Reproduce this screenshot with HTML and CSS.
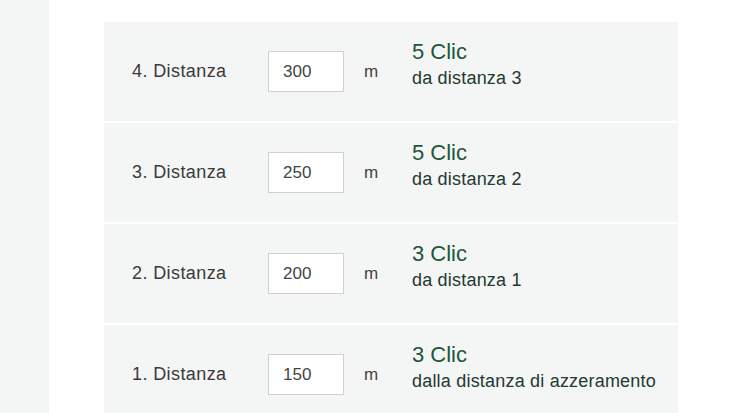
FILE: index.html
```html
<!DOCTYPE html>
<html lang="it">
<head>
  <meta charset="UTF-8">
  <title>Distanze</title>
  <meta name="viewport" content="width=device-width,initial-scale=1">
  <link rel="stylesheet" href="styles.css">
</head>
<body>
  <div class="page">
    <aside class="side"></aside>
    <main class="main">
      <div class="dist-table">
        <div class="dist-row">
          <div class="dist-label">4. Distanza</div>
          <input class="dist-input" type="text" value="300">
          <div class="dist-unit">m</div>
          <div class="dist-info">
            <div class="clic">5 Clic</div>
            <div class="from">da distanza 3</div>
          </div>
        </div>
        <div class="dist-row">
          <div class="dist-label">3. Distanza</div>
          <input class="dist-input" type="text" value="250">
          <div class="dist-unit">m</div>
          <div class="dist-info">
            <div class="clic">5 Clic</div>
            <div class="from">da distanza 2</div>
          </div>
        </div>
        <div class="dist-row">
          <div class="dist-label">2. Distanza</div>
          <input class="dist-input" type="text" value="200">
          <div class="dist-unit">m</div>
          <div class="dist-info">
            <div class="clic">3 Clic</div>
            <div class="from">da distanza 1</div>
          </div>
        </div>
        <div class="dist-row">
          <div class="dist-label">1. Distanza</div>
          <input class="dist-input" type="text" value="150">
          <div class="dist-unit">m</div>
          <div class="dist-info">
            <div class="clic">3 Clic</div>
            <div class="from">dalla distanza di azzeramento</div>
          </div>
        </div>
      </div>
    </main>
  </div>
</body>
</html>
```

FILE: styles.css
```css
body {
  margin: 0;
  background: #fff;
  font-family: "Liberation Sans", Arial, sans-serif;
  color: #333;
}
.page {
  display: flex;
  min-height: 100vh;
}
.side {
  width: 49px;
  background: #f4f5f5;
  flex: none;
}
.main {
  padding: 22px 0 0 55px;
}
.dist-table {
  width: 574px;
  display: flex;
  flex-direction: column;
  gap: 2px;
}
.dist-row {
  height: 99px;
  background: #f4f5f5;
  display: flex;
  align-items: center;
  padding-left: 28px;
}
.dist-label {
  width: 136px;
  font-size: 18px;
  letter-spacing: 0.4px;
  color: #3a3a3a;
}
.dist-input {
  width: 76px;
  height: 41px;
  box-sizing: border-box;
  border: 1px solid #cfd1d1;
  background: #fff;
  font-family: "Liberation Sans", Arial, sans-serif;
  font-size: 17px;
  color: #444;
  padding: 0 0 0 14px;
  margin: 0;
  outline: none;
}
.dist-unit {
  width: 68px;
  padding-left: 20px;
  box-sizing: border-box;
  font-size: 17px;
  color: #444;
}
.dist-info {
  margin-bottom: 13px;
}
.clic {
  font-size: 22px;
  color: #1d573c;
  line-height: 26px;
}
.from {
  font-size: 18px;
  letter-spacing: 0.2px;
  color: #24392f;
  line-height: 26px;
}
```
